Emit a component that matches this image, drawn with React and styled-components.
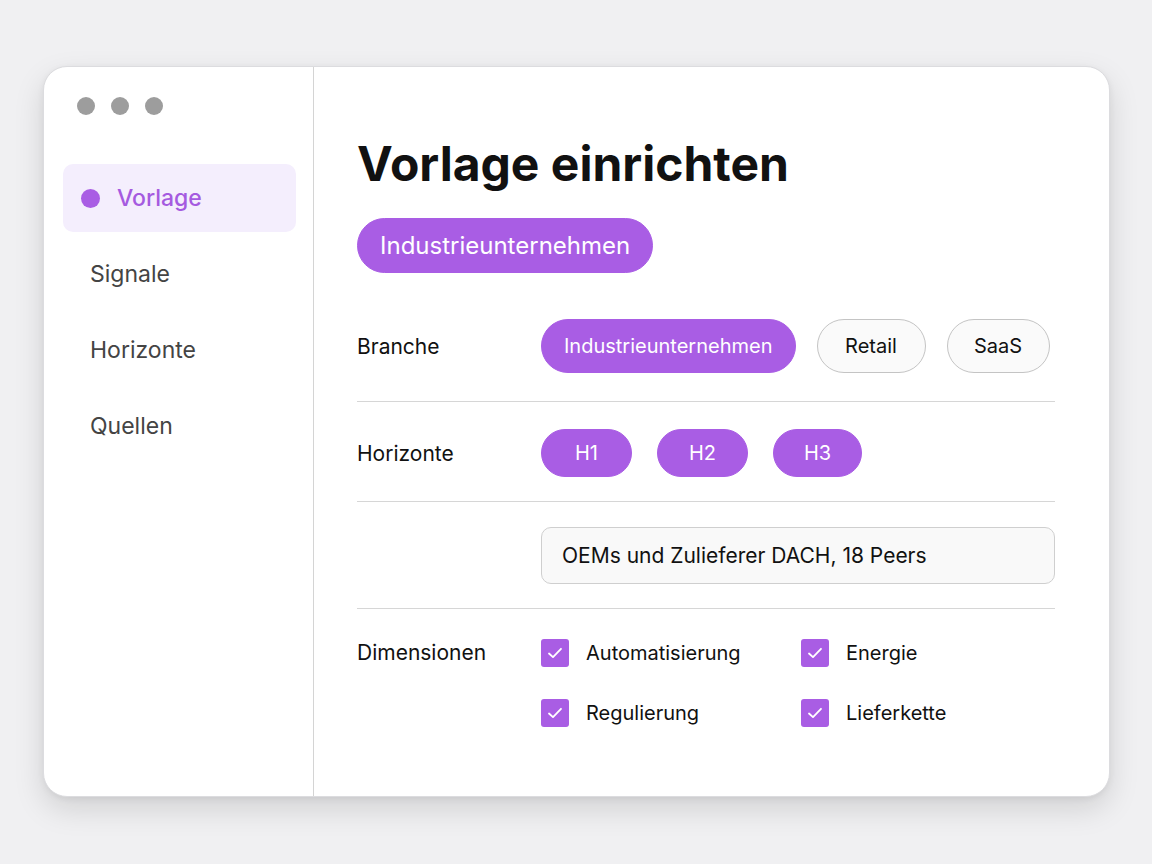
import styled, { createGlobalStyle } from 'styled-components';

const purple = '#a95de4';

const GlobalStyle = createGlobalStyle`
  html, body {
    margin: 0;
    padding: 0;
    background: #f0f0f2;
    font-family: Inter, "Noto Sans", sans-serif;
  }
`;

const Page = styled.div`
  width: 1152px;
  height: 864px;
  box-sizing: border-box;
  padding: 66px 42px 0 43px;
`;

const Window = styled.div`
  display: flex;
  height: 729px;
  background: #fff;
  border-radius: 24px;
  border: 1px solid #dcdcdf;
  box-shadow: 0 12px 30px rgba(0, 0, 0, 0.13), 0 2px 6px rgba(0, 0, 0, 0.06);
  overflow: hidden;
`;

const Sidebar = styled.aside`
  width: 270px;
  flex-shrink: 0;
  border-right: 1px solid #d4d4d4;
  box-sizing: border-box;
  padding: 30px 17px 0 19px;
`;

const Dots = styled.div`
  display: flex;
  gap: 16px;
  padding-left: 14px;
  margin-bottom: 49px;
`;

const Dot = styled.span`
  width: 18px;
  height: 18px;
  border-radius: 50%;
  background: #9d9d9d;
`;

const Nav = styled.nav`
  display: flex;
  flex-direction: column;
  gap: 8px;
`;

const NavItem = styled.div`
  display: flex;
  align-items: center;
  gap: 17px;
  height: 68px;
  padding-left: ${(p) => (p.$active ? '18px' : '27px')};
  border-radius: 10px;
  background: ${(p) => (p.$active ? '#f4eefd' : 'transparent')};
  color: ${(p) => (p.$active ? '#a55ae0' : '#444')};
  font-size: 23px;
  font-weight: ${(p) => (p.$active ? 500 : 400)};
`;

const NavDot = styled.span`
  width: 19px;
  height: 19px;
  border-radius: 50%;
  background: ${purple};
`;

const Main = styled.main`
  flex: 1;
  min-width: 0;
  padding: 69px 54px 0 43px;
`;

const Title = styled.h1`
  margin: 0;
  font-size: 48px;
  line-height: 55px;
  font-weight: 700;
  color: #111;
`;

const Pill = styled.div`
  display: inline-flex;
  align-items: center;
  justify-content: center;
  box-sizing: border-box;
  height: ${(p) => p.$h || 54}px;
  min-width: ${(p) => p.$w || 0}px;
  padding: 0 ${(p) => p.$px || 22}px;
  border-radius: 999px;
  font-size: ${(p) => p.$size || 20}px;
  background: ${(p) => (p.$on ? purple : '#fafafa')};
  color: ${(p) => (p.$on ? '#fff' : '#111')};
  border: 1px solid ${(p) => (p.$on ? purple : '#c4c4c4')};
`;

const Preset = styled(Pill)`
  margin-top: 27px;
`;

const Form = styled.div`
  margin-top: 46px;
`;

const Row = styled.div`
  display: grid;
  grid-template-columns: 184px 1fr;
  align-items: ${(p) => (p.$top ? 'start' : 'center')};
  padding: ${(p) => p.$pad};
  border-bottom: ${(p) => (p.$last ? 'none' : '1px solid #d6d6d6')};
`;

const Label = styled.div`
  font-size: 21px;
  color: #111;
  line-height: ${(p) => (p.$top ? '30px' : 'normal')};
`;

const Chips = styled.div`
  display: flex;
  gap: ${(p) => p.$gap || 21}px;
`;

const Input = styled.div`
  height: 57px;
  box-sizing: border-box;
  display: flex;
  align-items: center;
  padding: 0 20px;
  border: 1px solid #cfcfcf;
  border-radius: 10px;
  background: #f9f9f9;
  font-size: 21px;
  color: #111;
`;

const Checks = styled.div`
  display: grid;
  grid-template-columns: 260px 1fr;
  row-gap: 30px;
`;

const Check = styled.label`
  display: flex;
  align-items: center;
  gap: 17px;
  font-size: 20px;
  color: #111;
  height: 30px;
`;

const Box = styled.span`
  width: 28px;
  height: 28px;
  border-radius: 3px;
  background: ${purple};
  display: flex;
  align-items: center;
  justify-content: center;
`;

const CheckIcon = () => (
  <svg width="18" height="18" viewBox="0 0 18 18" fill="none">
    <path d="M3 9.5l4 3.6L15 4.8" stroke="#fff" strokeWidth="1.8" strokeLinecap="round" strokeLinejoin="round" />
  </svg>
);

const navItems = ['Vorlage', 'Signale', 'Horizonte', 'Quellen'];
const dimensions = ['Automatisierung', 'Energie', 'Regulierung', 'Lieferkette'];

export default function App() {
  return (
    <>
      <GlobalStyle />
      <Page>
        <Window>
          <Sidebar>
            <Dots>
              <Dot />
              <Dot />
              <Dot />
            </Dots>
            <Nav>
              {navItems.map((item, i) => (
                <NavItem key={item} $active={i === 0}>
                  {i === 0 && <NavDot />}
                  {item}
                </NavItem>
              ))}
            </Nav>
          </Sidebar>
          <Main>
            <Title>Vorlage einrichten</Title>
            <Preset $on $h={55} $size={24}>Industrieunternehmen</Preset>
            <Form>
              <Row $pad="0 0 28px">
                <Label>Branche</Label>
                <Chips>
                  <Pill $on>Industrieunternehmen</Pill>
                  <Pill $w={109}>Retail</Pill>
                  <Pill $w={103}>SaaS</Pill>
                </Chips>
              </Row>
              <Row $pad="27px 0 24px">
                <Label>Horizonte</Label>
                <Chips $gap={25}>
                  <Pill $on $h={48} $w={91}>H1</Pill>
                  <Pill $on $h={48} $w={91}>H2</Pill>
                  <Pill $on $h={48} $w={89}>H3</Pill>
                </Chips>
              </Row>
              <Row $pad="25px 0 24px">
                <Label />
                <Input>OEMs und Zulieferer DACH, 18 Peers</Input>
              </Row>
              <Row $pad="29px 0 0" $top $last>
                <Label $top>Dimensionen</Label>
                <Checks>
                  {dimensions.map((d) => (
                    <Check key={d}>
                      <Box>
                        <CheckIcon />
                      </Box>
                      {d}
                    </Check>
                  ))}
                </Checks>
              </Row>
            </Form>
          </Main>
        </Window>
      </Page>
    </>
  );
}
